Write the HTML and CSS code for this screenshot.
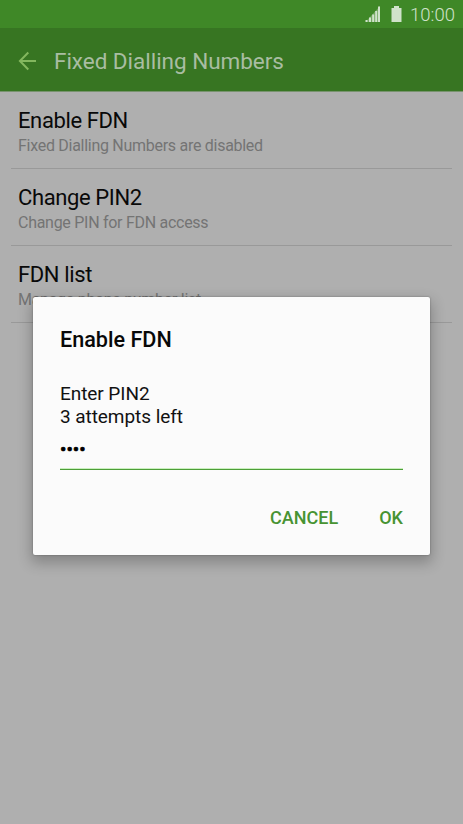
FILE: index.html
```html
<!DOCTYPE html>
<html lang="en">
<head>
<meta charset="utf-8">
<title>Fixed Dialling Numbers</title>
<link rel="stylesheet" href="styles.css">
</head>
<body>
<div class="screen">
  <div class="status">
    <svg class="signal" width="16" height="16" viewBox="0 0 16 16"><path d="M.5 14h2v2h-2zM4 11.5h2V16H4zM7.200 8.500h2V16h-2zM10.200 5h2v11h-2zM13 .5h2V16h-2z"/><path class="faint" d="M.5 16 15 0v16z"/></svg>
    <svg class="battery" width="11" height="16" viewBox="0 0 11 16"><path d="M3 0h5v2h2.500v14H.5V2H3z"/></svg>
    <span class="clock">10:00</span>
  </div>
  <header class="bar">
    <svg class="back" width="19" height="20" viewBox="0 0 19 20"><path d="M18 10H2M10.300 1.500 1.900 10l8.400 8.500"/></svg>
    <h1>Fixed Dialling Numbers</h1>
  </header>
  <main class="list">
    <section class="row"><h2>Enable FDN</h2><p>Fixed Dialling Numbers are disabled</p></section>
    <section class="row"><h2>Change PIN2</h2><p>Change PIN for FDN access</p></section>
    <section class="row"><h2>FDN list</h2><p>Manage phone number list</p></section>
  </main>
  <div class="dialog" role="dialog">
    <h3>Enable FDN</h3>
    <p class="message">Enter PIN2<br>3 attempts left</p>
    <div class="field">••••</div>
    <div class="actions"><span class="cancel">CANCEL</span><span>OK</span></div>
  </div>
</div>
</body>
</html>
```
FILE: styles.css
```css
* { box-sizing: border-box; margin: 0; padding: 0; }
body { font-family: Roboto, sans-serif; background: #afafaf; }
h1, h2 { font-weight: 400; }
.screen { position: relative; width: 463px; height: 824px; overflow: hidden; background: #afafaf; }
.status { display: flex; height: 28px; padding: 6px 9px 0 0; justify-content: flex-end; background: #3f8827; color: #d0e2ca; }
.status svg { fill: #d0e2ca; }
.signal { margin-right: 10px; }
.signal .faint { opacity: .35; }
.battery { margin-right: 8px; }
.clock { width: 44px; font-size: 18.5px; line-height: 19px; font-weight: 300; white-space: nowrap; }
.bar { display: flex; height: 64px; padding: 3px 0 0 18px; align-items: center; background: #377522; border-bottom: 1px solid #78936e; }
.back { margin-right: 17px; fill: none; stroke: #83b75e; stroke-width: 2; }
.bar h1 { font-size: 22.5px; line-height: 28px; letter-spacing: -.03px; color: #a9bda2; white-space: nowrap; }
.list { padding: 0 11px; }
.row { height: 77px; padding: 15px 7px 0; border-bottom: 1px solid #999; }
.row h2 { font-size: 22px; line-height: 28px; letter-spacing: -.38px; color: #090909; }
.row p { font-size: 16px; line-height: 22px; letter-spacing: -.28px; color: #747474; }
.dialog { position: absolute; left: 33px; top: 297px; width: 397px; height: 258px; padding: 29px 27px 0; border-radius: 2px; background: #fbfbfb; box-shadow: 0 6px 14px 2px rgba(0,0,0,.24), 0 0 2px rgba(0,0,0,.35); }
.dialog h3 { font-size: 21.6px; line-height: 28px; font-weight: 500; color: #080808; }
.message { margin-top: 28px; font-size: 19px; line-height: 23px; letter-spacing: -.06px; color: #111; }
.field { height: 42px; padding-top: 10px; border-bottom: 1px solid #4d9e38; box-shadow: inset 0 -1px #c9f0bd; font-size: 19px; line-height: 23px; color: #000; -webkit-text-stroke: .7px #000; }
.actions { display: flex; margin-top: 35px; justify-content: flex-end; font-size: 18px; line-height: 26px; font-weight: 500; color: #479332; }
.cancel { margin-right: 41px; }
```
